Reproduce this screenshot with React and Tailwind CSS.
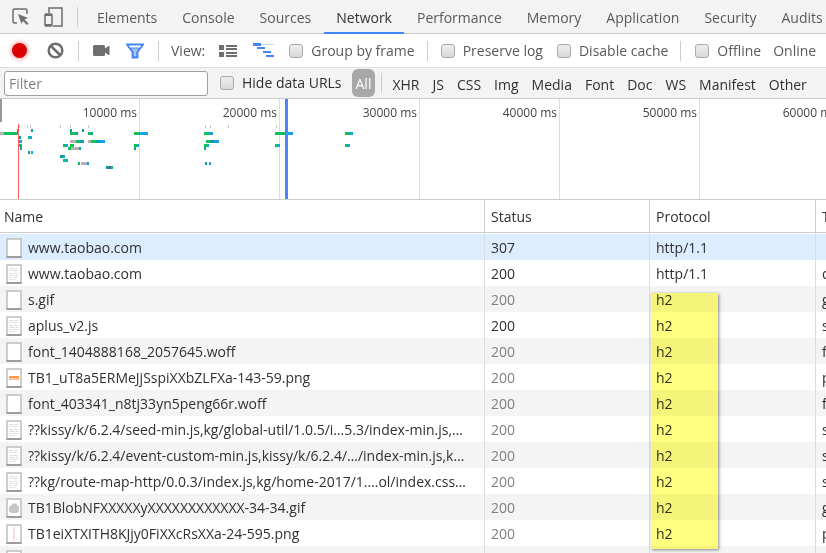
import { useState } from 'react';
import clsx from 'clsx';

const tabs = ['Elements', 'Console', 'Sources', 'Network', 'Performance', 'Memory', 'Application', 'Security', 'Audits'];

const types = ['XHR', 'JS', 'CSS', 'Img', 'Media', 'Font', 'Doc', 'WS', 'Manifest', 'Other'];

const ticks = [10000, 20000, 30000, 40000, 50000, 60000];

const requests = [
    { name: 'www.taobao.com', status: 307, protocol: 'http/1.1', type: '', icon: 'blank' },
    { name: 'www.taobao.com', status: 200, protocol: 'http/1.1', type: 'document', icon: 'text' },
    { name: 's.gif', status: 200, protocol: 'h2', type: 'gif', icon: 'blank', cached: true },
    { name: 'aplus_v2.js', status: 200, protocol: 'h2', type: 'script', icon: 'text' },
    { name: 'font_1404888168_2057645.woff', status: 200, protocol: 'h2', type: 'font', icon: 'blank', cached: true },
    { name: 'TB1_uT8a5ERMeJjSspiXXbZLFXa-143-59.png', status: 200, protocol: 'h2', type: 'png', icon: 'banner', cached: true },
    { name: 'font_403341_n8tj33yn5peng66r.woff', status: 200, protocol: 'h2', type: 'font', icon: 'blank', cached: true },
    { name: '??kissy/k/6.2.4/seed-min.js,kg/global-util/1.0.5/i…5.3/index-min.js,…', status: 200, protocol: 'h2', type: 'script', icon: 'text', cached: true },
    { name: '??kissy/k/6.2.4/event-custom-min.js,kissy/k/6.2.4/…/index-min.js,k…', status: 200, protocol: 'h2', type: 'script', icon: 'text', cached: true },
    { name: '??kg/route-map-http/0.0.3/index.js,kg/home-2017/1.…ol/index.css…', status: 200, protocol: 'h2', type: 'stylesheet', icon: 'text', cached: true },
    { name: 'TB1BlobNFXXXXXyXXXXXXXXXXXX-34-34.gif', status: 200, protocol: 'h2', type: 'gif', icon: 'blob', cached: true },
    { name: 'TB1eiXTXITH8KJjy0FiXXcRsXXa-24-595.png', status: 200, protocol: 'h2', type: 'png', icon: 'strip', cached: true },
    { name: '', status: '', protocol: '', type: '', icon: 'blank' },
];

const GREEN = '#0fc25a';
const BLUE = '#12a5ee';
const TEAL = '#0e9f9a';
const GRAY = '#b3b3b3';

// [x, y, width, color]
const bars = [
    [0, 33, 4, GRAY], [4, 33, 14, GREEN], [17, 30, 2, TEAL], [31, 30, 2, TEAL], [70, 30, 2, TEAL], [82, 30, 2, TEAL],
    [70, 33, 5, GREEN], [75, 33, 3, TEAL], [88, 33, 3, GREEN], [91, 33, 2, TEAL], [134, 33, 5, GREEN], [139, 33, 9, BLUE],
    [18, 37, 3, TEAL], [28, 37, 2, GREEN], [30, 37, 2, BLUE],
    [18, 41, 4, BLUE], [70, 41, 6, GRAY], [76, 41, 4, GREEN], [80, 41, 4, TEAL], [88, 41, 3, GRAY], [91, 41, 5, GREEN], [96, 41, 4, TEAL], [100, 41, 5, BLUE],
    [18, 45, 4, GREEN], [63, 45, 3, GREEN], [66, 45, 2, BLUE], [70, 45, 4, GREEN], [134, 45, 3, GREEN], [137, 45, 2, BLUE],
    [20, 48, 2, TEAL], [68, 48, 3, GREEN], [71, 48, 8, GRAY], [79, 48, 2, TEAL], [134, 48, 2, TEAL],
    [28, 52, 2, TEAL], [31, 52, 2, BLUE], [60, 56, 3, TEAL], [63, 56, 2, BLUE], [63, 60, 3, GREEN], [66, 60, 2, BLUE],
    [78, 63, 2, GREEN], [81, 63, 6, GRAY], [87, 63, 2, BLUE], [106, 67, 3, TEAL], [109, 67, 2, '#55608f'], [111, 67, 2, GREEN],
    [204, 33, 6, GREEN], [210, 33, 3, BLUE], [206, 41, 4, GREEN], [210, 41, 5, TEAL], [215, 41, 4, BLUE],
    [204, 45, 3, GREEN], [207, 45, 2, BLUE], [204, 48, 2, TEAL], [205, 63, 2, TEAL], [209, 63, 2, BLUE],
    [275, 33, 11, GREEN], [288, 33, 5, BLUE], [275, 45, 3, GREEN], [278, 45, 2, BLUE],
    [345, 33, 4, GREEN], [349, 33, 4, BLUE], [345, 45, 3, GREEN], [348, 45, 2, BLUE],
];

const marks = [19, 27, 30, 60, 70, 88, 205, 210, 228, 276];

const Divider = ({ className }) => <div className={clsx('h-5 w-px shrink-0 bg-[#ccc]', className)} />;

const Checkbox = ({ label, className }) => (
    <label className={clsx('flex shrink-0 items-center gap-2', className)}>
        <input
            type="checkbox"
            className="size-[14px] appearance-none rounded-[3px] border border-[#a9a9a9] bg-linear-to-b from-[#ededed] to-[#d9d9d9] checked:bg-[#4285f4]"
        />
        {label}
    </label>
);

const FileIcon = ({ kind }) => (
    <svg width="16" height="20" viewBox="0 0 16 20" className="shrink-0">
        <rect x="1" y="1" width="14" height="18" fill="#fff" stroke="#bdbdbd" strokeWidth="1.5" />
        <path d="M.5 19h15" stroke="#8c8c8c" strokeWidth="1.5" />
        {kind === 'text' && (
            <path
                d="M3.5 4.5h4m1 0h3M3.5 6.5h2m1 0h5M3.5 9.500h3m1 0h4M3.5 11.5h5m1 0h3M3.5 13.5h2m1 0h5M3.5 15.500h3m1 0h2"
                stroke="#dadada"
            />
        )}
        {kind === 'banner' && (
            <>
                <path d="M3 9h10" stroke="#ff9a4d" strokeWidth="2" />
                <path d="M3 11h10" stroke="#ffb98a" strokeWidth="2" strokeDasharray="3 .5" />
            </>
        )}
        {kind === 'blob' && <path d="M6 5l2 1 2-1 1 2 2 2v4l-2 2H5l-2-2V9l3-2z" fill="#c4c4c4" />}
        {kind === 'strip' && (
            <>
                <path d="M8 3v14" stroke="#fae0e9" strokeWidth="2" />
                <path d="M8 5v10" stroke="#f7cba8" strokeWidth="1.5" strokeDasharray="1 3" />
            </>
        )}
    </svg>
);

const TabBar = ({ active, onSelect }) => (
    <div className="flex h-[34px] shrink-0 items-stretch border-b border-[#ccc] bg-[#f3f3f3] text-[#5a5a5a]">
        <button aria-label="Inspect element" className="ml-3 flex shrink-0 items-center">
            <svg width="17" height="17" viewBox="0 0 17 17" fill="none">
                <path d="M15 6V2.500Q15 1 13.500 1H2.500Q1 1 1 2.500V13.500Q1 15 2.500 15H5" stroke="#6e6e6e" strokeWidth="1.5" />
                <path d="M6 6l10 4-3.500 1.500 4 4-1.500 1.500-4-4L9.500 16z" fill="#6e6e6e" />
            </svg>
        </button>
        <button aria-label="Toggle device toolbar" className="ml-[15px] flex shrink-0 items-center">
            <svg width="19" height="20" viewBox="0 0 19 20" fill="none" stroke="#6e6e6e">
                <path d="M5 6V1h13v18H9" strokeWidth="1.5" />
                <rect x="1" y="7" width="7" height="12" rx="1" strokeWidth="1.5" />
                <path d="M1 8h7M1 18h7" strokeWidth="2" />
            </svg>
        </button>
        <Divider className="mr-[7px] ml-[14px] self-center" />
        <div className="flex gap-px">
            {tabs.map((tab) => (
                <button
                    key={tab}
                    onClick={() => onSelect(tab)}
                    className={clsx(
                        '-mb-px border-b-2 px-3 pt-1',
                        tab === active ? 'border-[#4285f4] text-[#333]' : 'border-transparent'
                    )}
                >
                    {tab}
                </button>
            ))}
        </div>
    </div>
);

const Toolbar = () => (
    <div className="flex h-[34px] shrink-0 items-center border-b border-[#ddd] bg-white text-[#5a5a5a]">
        <button aria-label="Record" className="ml-3 size-[15px] shrink-0 rounded-full bg-[#d80000] shadow-[0_0_4px_1px_#f99]" />
        <button aria-label="Clear" className="ml-5 shrink-0">
            <svg width="17" height="17" viewBox="0 0 17 17" fill="none" stroke="#6e6e6e" strokeWidth="2.500">
                <circle cx="8.500" cy="8.500" r="6.800" />
                <path d="M4 4l9 9" />
            </svg>
        </button>
        <Divider className="mx-[14px]" />
        <button aria-label="Capture screenshots" className="shrink-0">
            <svg width="17" height="11" viewBox="0 0 17 11" fill="#6e6e6e">
                <path d="M0 1.500Q0 0 1.500 0H11q1 0 1 1.500V3.500L15.500 1H16.500V10H15.500L12 7.500V9.500Q12 11 11 11H1.500Q0 11 0 9.500z" />
            </svg>
        </button>
        <button aria-label="Filter" className="mr-[14px] ml-4 shrink-0">
            <svg width="18" height="16" viewBox="0 0 18 16" fill="none" stroke="#4285f4">
                <path d="M4.500 5h9L11 9v5H7V9z" fill="#a7c5f8" />
                <path d="M1 1.500h16L11.500 9v5.500h-5V9z" strokeWidth="1.800" />
            </svg>
        </button>
        <Divider className="mr-3" />
        <span className="shrink-0">View:</span>
        <button aria-label="Use large request rows" className="ml-[14px] shrink-0">
            <svg width="18" height="12" viewBox="0 0 18 12" fill="#6e6e6e">
                <path d="M0 0h5v5H0zM0 7h5v5H0zM7 0h11v2H7zM7 3h11v2H7zM7 7h11v2H7zM7 10h11v2H7z" />
            </svg>
        </button>
        <button aria-label="Show overview" className="ml-4 shrink-0">
            <svg width="22" height="15" viewBox="0 0 22 15" fill="#4285f4">
                <path d="M8 1h13v1H8z" fill="#c6dafc" />
                <path d="M0 0h8v3H0zM4 4h8v2H4zM10 8h8v2h-8zM13 12h8v2h-8z" />
            </svg>
        </button>
        <Checkbox label="Group by frame" className="ml-[14px]" />
        <Divider className="mx-3" />
        <Checkbox label="Preserve log" className="ml-px" />
        <Checkbox label="Disable cache" className="ml-[14px]" />
        <Divider className="mx-3" />
        <Checkbox label="Offline" className="ml-0.5" />
        <select aria-label="Throttling" className="ml-3 shrink-0 appearance-none bg-transparent">
            <option>Online</option>
        </select>
    </div>
);

const FilterBar = () => {
    const [type, setType] = useState('All');

    return (
        <div className="flex h-[31px] shrink-0 items-center border-b border-[#ccc] bg-[#f3f3f3] text-[#303030]">
            <input
                type="text"
                placeholder="Filter"
                aria-label="Filter"
                className="ml-1 h-[25px] w-[204px] shrink-0 rounded-[3px] border border-[#a0a0a0] bg-white px-1 placeholder:text-[#808080]"
            />
            <Checkbox label="Hide data URLs" className="mr-[10px] ml-3" />
            <button
                onClick={() => setType('All')}
                className={clsx('h-7 shrink-0 rounded-md px-1 pt-0.5', type === 'All' && 'bg-[#a8a8a8] text-white')}
            >
                All
            </button>
            <Divider className="mr-[10px] ml-[6px]" />
            <div className="flex gap-[13px] pt-[3px]">
                {types.map((item) => (
                    <button key={item} onClick={() => setType(item)} className={clsx('rounded-md', type === item && 'bg-[#a8a8a8] text-white')}>
                        {item}
                    </button>
                ))}
            </div>
        </div>
    );
};

const Overview = () => (
    <div className="relative h-[101px] shrink-0 overflow-hidden border-b border-[#ccc] bg-white">
        <div className="flex h-full">
            {ticks.map((tick) => (
                <div key={tick} className="w-[140px] shrink-0 border-r border-[#ddd] pt-1 pr-[2px] text-right text-xs leading-5 text-[#444]">
                    {tick} ms
                </div>
            ))}
        </div>
        <svg width="100%" height="100" className="absolute inset-0">
            <rect width="2" height="23" fill="#999" />
            {marks.map((x) => (
                <rect key={x} x={x} y="26" width="1" height="3" fill="#c4c4c4" />
            ))}
            {bars.map(([x, y, width, color]) => (
                <rect key={`${x}-${y}`} x={x} y={y} width={width} height="3" fill={color} />
            ))}
            <rect x="18" y="25" width="1" height="75" fill="#ff5a5a" />
            <rect x="285" width="3" height="100" fill="#4a86f7" />
        </svg>
    </div>
);

const RequestTable = () => (
    <div className="relative grow overflow-hidden bg-white text-[#303030]">
        <table className="w-[936px] table-fixed border-separate border-spacing-0 text-left">
            <colgroup>
                <col className="w-[485px]" />
                <col className="w-[165px]" />
                <col className="w-[166px]" />
                <col />
            </colgroup>
            <thead>
                <tr className="h-[33px] *:border-b *:border-[#ccc] *:pt-0.5 *:pb-0 *:font-normal">
                    <th className="border-r px-1">Name</th>
                    <th className="border-r px-[6px]">Status</th>
                    <th className="border-r px-[6px]">Protocol</th>
                    <th className="px-[6px]">Type</th>
                </tr>
            </thead>
            <tbody>
                {requests.map((req, i) => (
                    <tr
                        key={i}
                        className={clsx(
                            '*:border-[#ddd] *:pt-0.5 *:pb-0',
                            i === 0 ? 'h-[27px] bg-[#dcedff] *:border-t *:border-t-white' : 'h-[26px]',
                            i > 0 && i % 2 === 0 && 'bg-[#f4f4f4]'
                        )}
                    >
                        <td className="border-r px-[6px]">
                            <div className="flex items-center gap-[6px]">
                                <FileIcon kind={req.icon} />
                                <span>{req.name}</span>
                            </div>
                        </td>
                        <td className={clsx('border-r px-[6px]', req.cached && 'text-[#808080]')}>{req.status}</td>
                        <td className="border-r px-[6px]">{req.protocol}</td>
                        <td className="px-[6px]">{req.type}</td>
                    </tr>
                ))}
            </tbody>
        </table>
        {/* highlighter over the h2 rows */}
        <div className="pointer-events-none absolute top-[93px] left-[651px] h-64 w-[67px] bg-[#ffff80] mix-blend-multiply shadow-[1px_1px_3px_#888]" />
    </div>
);

const App = () => {
    const [active, setActive] = useState('Network');

    return (
        <div className="flex h-screen flex-col overflow-hidden font-['Open_Sans',sans-serif] text-sm leading-5 whitespace-nowrap">
            <TabBar active={active} onSelect={setActive} />
            <Toolbar />
            <FilterBar />
            <Overview />
            <RequestTable />
        </div>
    );
};

export default App;
